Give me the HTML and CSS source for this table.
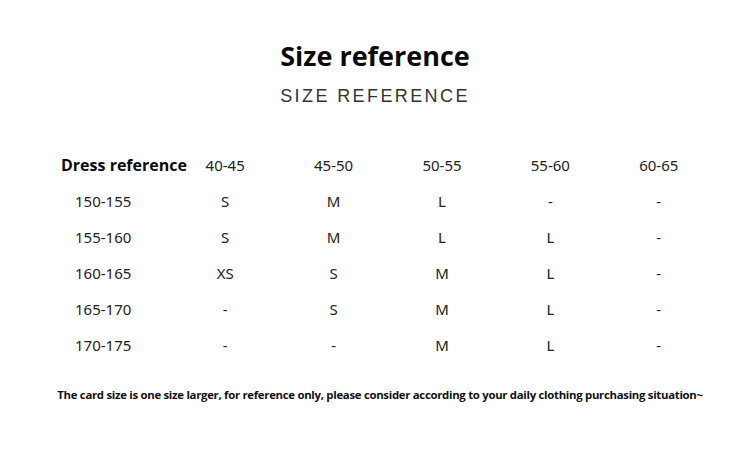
FILE: index.html
```html
<!DOCTYPE html>
<html>
<head>
<meta charset="utf-8">
<link rel="stylesheet" href="styles.css">
</head>
<body>
<div class="page">
  <h1 class="title">Size reference</h1>
  <div class="subtitle">SIZE REFERENCE</div>
  <div class="table">
    <div class="row head">
      <div class="label">Dress reference</div>
      <div class="cell">40-45</div><div class="cell">45-50</div><div class="cell">50-55</div><div class="cell">55-60</div><div class="cell">60-65</div>
    </div>
    <div class="row">
      <div class="label">150-155</div>
      <div class="cell">S</div><div class="cell">M</div><div class="cell">L</div><div class="cell">-</div><div class="cell">-</div>
    </div>
    <div class="row">
      <div class="label">155-160</div>
      <div class="cell">S</div><div class="cell">M</div><div class="cell">L</div><div class="cell">L</div><div class="cell">-</div>
    </div>
    <div class="row">
      <div class="label">160-165</div>
      <div class="cell">XS</div><div class="cell">S</div><div class="cell">M</div><div class="cell">L</div><div class="cell">-</div>
    </div>
    <div class="row">
      <div class="label">165-170</div>
      <div class="cell">-</div><div class="cell">S</div><div class="cell">M</div><div class="cell">L</div><div class="cell">-</div>
    </div>
    <div class="row">
      <div class="label">170-175</div>
      <div class="cell">-</div><div class="cell">-</div><div class="cell">M</div><div class="cell">L</div><div class="cell">-</div>
    </div>
  </div>
  <p class="note">The card size is one size larger, for reference only, please consider according to your daily clothing purchasing situation~</p>
</div>
</body>
</html>
```
FILE: styles.css
```css
html, body {
  margin: 0;
  padding: 0;
  background: #ffffff;
}
.page {
  width: 750px;
  height: 451px;
  font-family: "Noto Sans", sans-serif;
  color: #111;
  display: flex;
  flex-direction: column;
  align-items: center;
}
.title {
  margin: 37px 0 0 0;
  font-family: "Open Sans", sans-serif;
  font-weight: 700;
  font-size: 27px;
  line-height: 38px;
  color: #0a0a0a;
}
.subtitle {
  margin-top: 9px;
  font-family: "Liberation Sans", sans-serif;
  font-size: 18px;
  letter-spacing: 2.4px;
  line-height: 24px;
  color: #333;
  font-weight: 300;
}
.table {
  margin-top: 38px;
  width: 652px;
  align-self: flex-start;
  margin-left: 61px;
}
.row {
  display: grid;
  grid-template-columns: 110px repeat(5, 108.4px);
  height: 36px;
  align-items: center;
  font-size: 15px;
  color: #222;
}
.row .label {
  padding-left: 14px;
}
.row.head .label {
  padding-left: 0;
  font-family: "Open Sans", sans-serif;
  font-weight: 700;
  font-size: 16px;
  color: #0a0a0a;
  white-space: nowrap;
}
.row.head {
  height: 37px;
}
.cell {
  text-align: center;
}
.note {
  margin: 24px 0 0 10px;
  font-family: "Open Sans", sans-serif;
  font-weight: 700;
  font-size: 11.4px;
  line-height: 15px;
  letter-spacing: -0.3px;
  color: #111;
  white-space: nowrap;
}
```
